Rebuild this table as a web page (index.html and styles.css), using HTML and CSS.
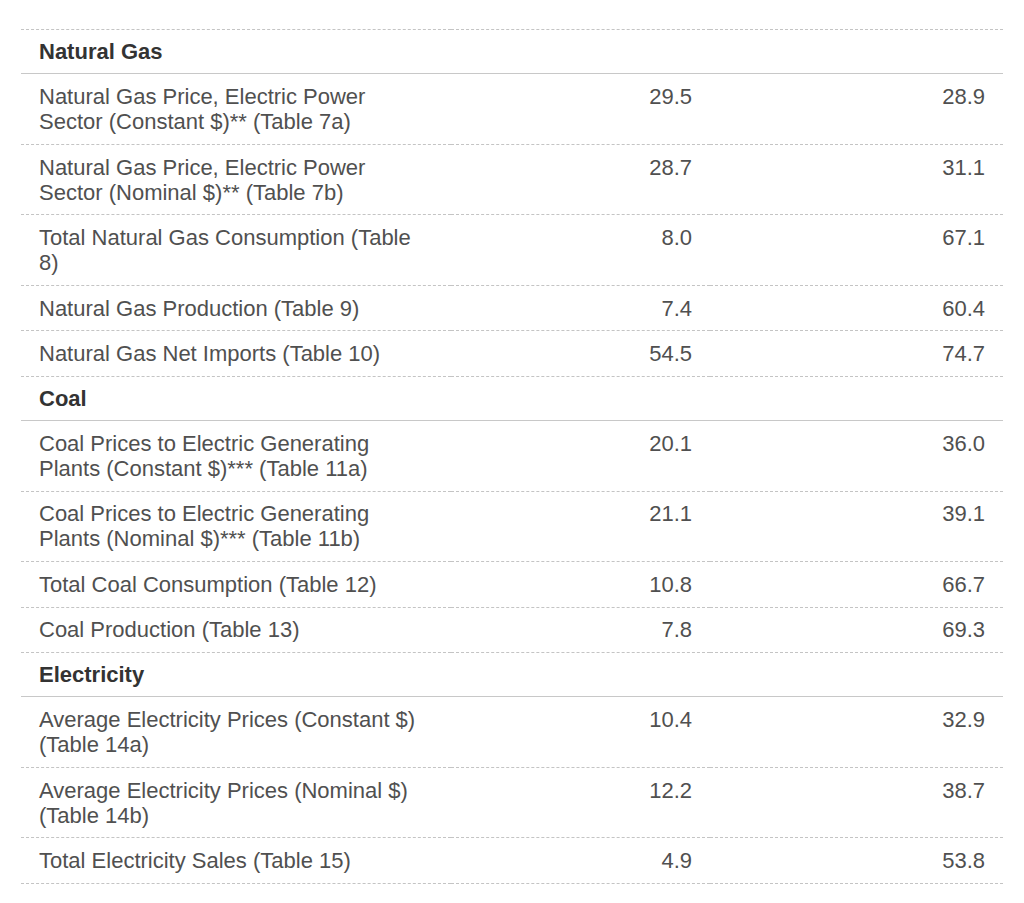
FILE: index.html
```html
<!DOCTYPE html>
<html>
<head>
<meta charset="utf-8">
<link rel="stylesheet" href="styles.css">
</head>
<body>
<div class="wrap">
<table class="data">
  <colgroup><col class="c-label"><col class="c-a"><col class="c-b"></colgroup>
  <tbody>
    <tr class="group"><th colspan="3">Natural Gas</th></tr>
    <tr><td>Natural Gas Price, Electric Power Sector (Constant $)** (Table 7a)</td><td class="num">29.5</td><td class="num">28.9</td></tr>
    <tr><td>Natural Gas Price, Electric Power Sector (Nominal $)** (Table 7b)</td><td class="num">28.7</td><td class="num">31.1</td></tr>
    <tr><td>Total Natural Gas Consumption (Table 8)</td><td class="num">8.0</td><td class="num">67.1</td></tr>
    <tr><td>Natural Gas Production (Table 9)</td><td class="num">7.4</td><td class="num">60.4</td></tr>
    <tr><td>Natural Gas Net Imports (Table 10)</td><td class="num">54.5</td><td class="num">74.7</td></tr>
    <tr class="group"><th colspan="3">Coal</th></tr>
    <tr><td>Coal Prices to Electric Generating Plants (Constant $)*** (Table 11a)</td><td class="num">20.1</td><td class="num">36.0</td></tr>
    <tr><td>Coal Prices to Electric Generating Plants (Nominal $)*** (Table 11b)</td><td class="num">21.1</td><td class="num">39.1</td></tr>
    <tr><td>Total Coal Consumption (Table 12)</td><td class="num">10.8</td><td class="num">66.7</td></tr>
    <tr><td>Coal Production (Table 13)</td><td class="num">7.8</td><td class="num">69.3</td></tr>
    <tr class="group"><th colspan="3">Electricity</th></tr>
    <tr><td>Average Electricity Prices (Constant $) (Table 14a)</td><td class="num">10.4</td><td class="num">32.9</td></tr>
    <tr><td>Average Electricity Prices (Nominal $) (Table 14b)</td><td class="num">12.2</td><td class="num">38.7</td></tr>
    <tr><td>Total Electricity Sales (Table 15)</td><td class="num">4.9</td><td class="num">53.8</td></tr>
  </tbody>
</table>
</div>
</body>
</html>
```

FILE: styles.css
```css
html, body {
  margin: 0;
  padding: 0;
  background: #ffffff;
}
.wrap {
  padding: 29px 21px 0 21px;
}
.data {
  width: 100%;
  border-collapse: collapse;
  table-layout: fixed;
  font-family: "Liberation Sans", Arial, sans-serif;
  font-size: 22px;
  line-height: 25px;
  color: #505050;
}
.c-label { width: 430px; }
.c-a { width: 259px; }
.c-b { width: auto; }
.data td, .data th {
  padding: 9.75px 18px 9.75px 18px;
  vertical-align: top;
  border-top: 1px dashed #c4c4c4;
  text-align: left;
}
.data tr:last-child td {
  border-bottom: 1px dashed #c4c4c4;
}
.data td:first-child {
  padding-right: 24px;
}
.data .num {
  text-align: right;
}
.group th {
  font-weight: bold;
  color: #333333;
  padding-top: 9.25px;
  padding-bottom: 9px;
  border-bottom: 1px solid #c8c8c8;
}
```
